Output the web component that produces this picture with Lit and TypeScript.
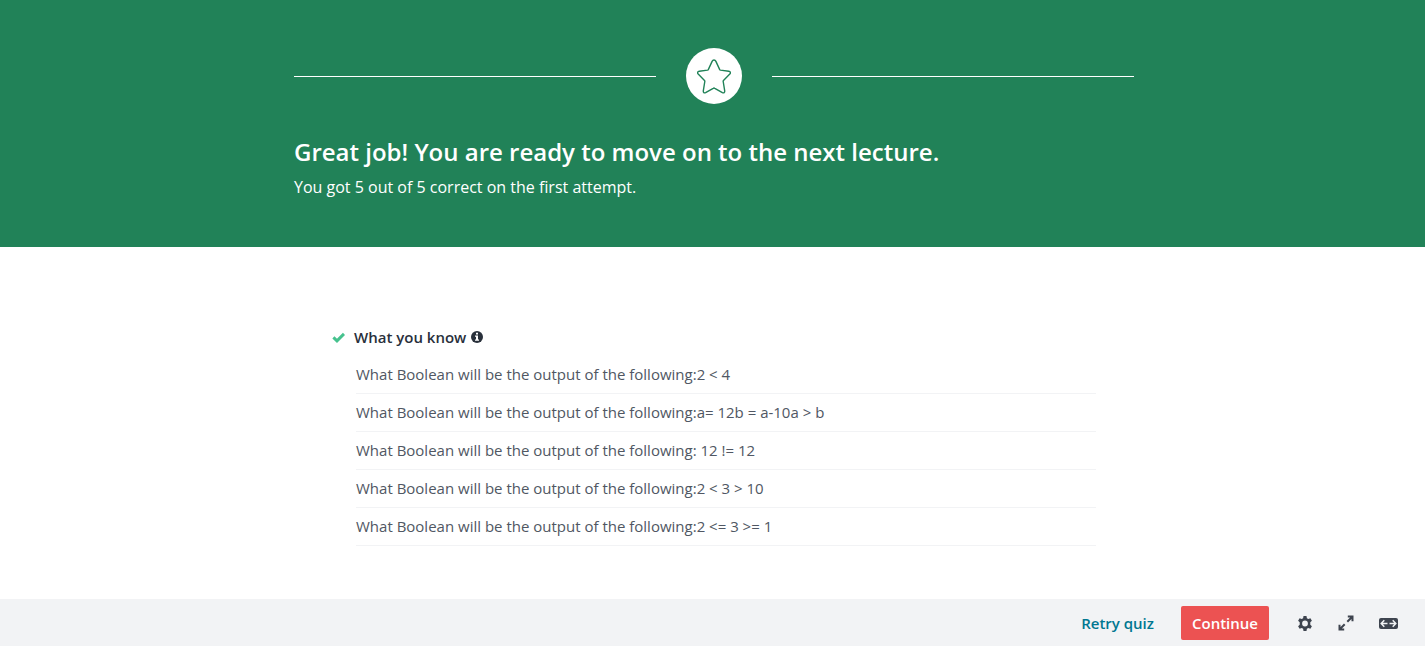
import { LitElement, html, css, svg } from "lit";
import { customElement, property } from "lit/decorators.js";

const icons = {
  star: svg`<path d="M17 1c.9 0 1.500.5 1.900 1.400l3.700 8c.2.4.5.6.9.7l8.200 1.100c1.800.3 2.300 1.600 1.100 2.900l-6.300 6.300c-.3.3-.4.7-.3 1.100l1.500 9.400c.2 1.600-.9 2.400-2.300 1.700l-7.600-4.300c-.5-.3-1.100-.3-1.600 0l-7.600 4.300c-1.400.7-2.500-.1-2.300-1.700l1.500-9.400c.1-.4 0-.8-.3-1.100l-6.300-6.300c-1.200-1.300-.7-2.600 1.100-2.900l8.200-1.100c.4-.1.7-.3.900-.7l3.700-8c.4-.9 1-1.400 1.900-1.400z" fill="none" stroke="currentColor" stroke-width="1.400" stroke-linejoin="round"/>`,
  check: svg`<path d="M1.400 6.300 5 9.800 12 2.900" fill="none" stroke="currentColor" stroke-width="3"/>`,
  info: svg`<circle cx="6" cy="6" r="6" fill="currentColor"/><path d="M5 1.800h2v1.700H5zM4 4.500h3v4h1v1.300H4V8.500h1V5.800H4z" fill="#fff"/>`,
  gear: svg`<path fill="currentColor" fill-rule="evenodd" d="M5.500 0h3l.4 2.200 1.400.8 2.100-.8 1.500 2.600-1.600 1.500v2.400l1.600 1.500-1.500 2.600-2.100-.8-1.400.8-.4 2.200h-3l-.4-2.200-1.400-.8-2.100.8L.1 10.200l1.600-1.500V6.300L.1 4.800l1.500-2.600 2.100.8 1.400-.8zM7 4.600a2.900 2.900 0 1 0 0 5.800 2.900 2.900 0 0 0 0-5.800z"/>`,
  expand: svg`<path d="M9.800 1.500h4.700v4.700M14 2 9.300 6.700M6.200 14.500H1.500V9.800M2 14l4.700-4.700" fill="none" stroke="currentColor" stroke-width="2"/>`,
  wide: svg`<rect width="19" height="11" rx="2" fill="currentColor"/><path d="M5.300 2.300 2.200 5.500l3.100 3.200M2.600 5.500h5.900M13.700 2.300l3.100 3.200-3.100 3.200M16.400 5.500h-5.900" fill="none" stroke="#f2f3f5" stroke-width="1.500"/>`,
};

@customElement("result-banner")
export class ResultBanner extends LitElement {
  @property({ type: Number }) correct = 0;
  @property({ type: Number }) total = 0;

  static styles = css`
    :host { display: block; padding-left: 3px; background: #218258; color: #fff; }
    .inner { box-sizing: border-box; max-width: 840px; margin: 0 auto; padding: 48px 0; }
    .divider { display: flex; align-items: center; gap: 30px; margin-bottom: 32px; }
    .line { flex: 1; height: 1px; background: #fff; }
    .badge { display: flex; align-items: center; justify-content: center; width: 56px; height: 56px; border-radius: 50%; background: #fff; color: #218258; }
    .star { display: block; width: 34px; height: 36px; }
    .title { margin: 0 0 7px; font-size: 24px; line-height: 32px; font-weight: 600; }
    .score { margin: 0; font-size: 16px; line-height: 24px; }
  `;

  render() {
    return html`
      <div class="inner">
        <div class="divider">
          <span class="line"></span>
          <span class="badge"><svg class="star" viewBox="0 -1 34 36" aria-hidden="true">${icons.star}</svg></span>
          <span class="line"></span>
        </div>
        <h1 class="title">Great job! You are ready to move on to the next lecture.</h1>
        <p class="score">You got ${this.correct} out of ${this.total} correct on the first attempt.</p>
      </div>
    `;
  }
}

@customElement("known-topics")
export class KnownTopics extends LitElement {
  @property({ attribute: false }) questions: string[] = [];

  static styles = css`
    :host { display: block; padding-left: 3px; }
    .section { box-sizing: border-box; max-width: 840px; margin: 0 auto; padding: 78px 38px 53px; }
    .heading { display: flex; align-items: center; margin: 0 0 7px; font-size: 15px; line-height: 24px; font-weight: 600; color: #29303b; }
    .check { width: 13px; height: 12px; margin-right: 9px; color: #46c28e; }
    .info { width: 12px; height: 12px; margin-left: 5px; color: #29303b; }
    .list { list-style: none; margin: 0; padding: 0 0 0 24px; }
    .item { padding: 6px 0 7px; border-bottom: 1px solid #f2f3f5; font-size: 15px; line-height: 24px; color: #505763; }
  `;

  render() {
    return html`
      <section class="section">
        <h2 class="heading">
          <svg class="check" viewBox="0 0 13 12" aria-hidden="true">${icons.check}</svg>What you know<svg class="info" viewBox="0 0 12 12" aria-hidden="true">${icons.info}</svg>
        </h2>
        <ul class="list">
          ${this.questions.map((q) => html`<li class="item">${q}</li>`)}
        </ul>
      </section>
    `;
  }
}

@customElement("quiz-footer")
export class QuizFooter extends LitElement {
  static styles = css`
    :host { display: flex; align-items: center; justify-content: flex-end; padding: 7px 27px 6px; background: #f2f3f5; }
    button { border: 0; margin: 0; padding: 0; background: none; font-family: inherit; font-size: 15px; line-height: 24px; font-weight: 600; cursor: pointer; }
    .retry { margin-right: 27px; color: #007791; }
    .continue { margin-right: 29px; padding: 5px 11px; border-radius: 2px; background: #ec5252; color: #fff; }
    .tool { display: flex; color: #3e444f; }
    .tools { display: flex; align-items: center; gap: 25px; }
    .gear { width: 15px; height: 15px; }
    .expand { width: 16px; height: 16px; }
    .wide { width: 19px; height: 11px; }
  `;

  render() {
    return html`
      <button class="retry" type="button">Retry quiz</button>
      <button class="continue" type="button">Continue</button>
      <div class="tools">
        <button class="tool" type="button" aria-label="Settings"><svg class="gear" viewBox="0 0 15 15">${icons.gear}</svg></button>
        <button class="tool" type="button" aria-label="Fullscreen"><svg class="expand" viewBox="0 0 16 16">${icons.expand}</svg></button>
        <button class="tool" type="button" aria-label="Expanded view"><svg class="wide" viewBox="0 0 19 11">${icons.wide}</svg></button>
      </div>
    `;
  }
}

@customElement("app-root")
export class AppRoot extends LitElement {
  static styles = css`
    :host { display: flex; flex-direction: column; min-height: 100vh; background: #fff; font-family: "Open Sans", "Noto Sans", sans-serif; }
    .content { flex: 1; }
  `;

  private questions = [
    "What Boolean will be the output of the following:2 < 4",
    "What Boolean will be the output of the following:a= 12b = a-10a > b",
    "What Boolean will be the output of the following: 12 != 12",
    "What Boolean will be the output of the following:2 < 3 > 10",
    "What Boolean will be the output of the following:2 <= 3 >= 1",
  ];

  render() {
    return html`
      <result-banner .correct=${5} .total=${5}></result-banner>
      <main class="content"><known-topics .questions=${this.questions}></known-topics></main>
      <quiz-footer></quiz-footer>
    `;
  }
}
